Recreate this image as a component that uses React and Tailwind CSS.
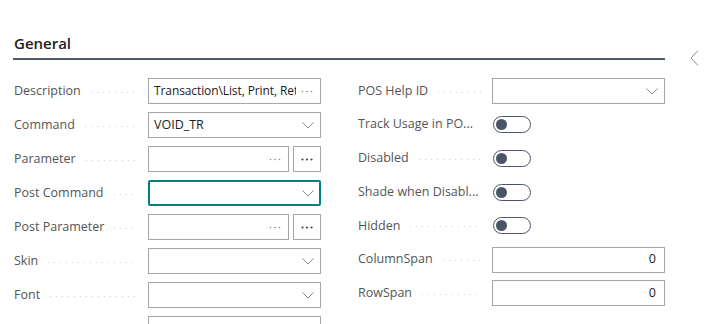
import React from 'react';

const Chevron = () => (
  <svg width="12" height="7" viewBox="0 0 12 7" className="shrink-0">
    <path d="M0.5 0.5 L6 6 L11.5 0.5" fill="none" stroke="#8a8a8a" strokeWidth="1" />
  </svg>
);

const Leader = () => (
  <div className="flex-1 h-px ml-[10px] mr-[10px] mt-[2px] bg-[linear-gradient(to_right,#cfcfcf_1px,transparent_1px)] bg-[length:6px_1px] bg-repeat-x" />
);

const Label = ({ text }) => (
  <div className="w-[134px] shrink-0 flex items-center">
    <span className="text-[12.5px] text-[#555] whitespace-nowrap">{text}</span>
    <Leader />
  </div>
);

const Dots = ({ dark }) => (
  <svg width="12" height="3" viewBox="0 0 12 3" className="shrink-0">
    {[1.5, 6, 10.5].map((cx) => (
      <circle key={cx} cx={cx} cy="1.5" r={dark ? 1.1 : 0.8} fill={dark ? '#444' : '#8a8a8a'} />
    ))}
  </svg>
);

const TextBox = ({ value, dots, align = 'left', size = 'text-[12.5px]' }) => (
  <div className="flex-1 min-w-0 h-[26px] border border-[#a6a6a6] flex items-center pl-[5px] pr-[7px]">
    <span
      className={`flex-1 min-w-0 overflow-hidden whitespace-nowrap ${size} text-[#212121] ${
        align === 'right' ? 'text-right pr-[1px]' : ''
      }`}
    >
      {value}
    </span>
    {dots && <span className="pl-[5px] flex"><Dots /></span>}
  </div>
);

const SelectBox = ({ value, focused }) => (
  <div
    className={`flex-1 min-w-0 h-[26px] flex items-center justify-between ${
      focused ? 'border-2 border-[#00807e] rounded-[2px] pl-[4px] pr-[5px]' : 'border border-[#a6a6a6] pl-[5px] pr-[6px]'
    }`}
  >
    <span className="text-[12.5px] text-[#212121]">{value}</span>
    <Chevron />
  </div>
);

const LookupBox = () => (
  <div className="flex-1 min-w-0 flex gap-[4px]">
    <TextBox value="" dots />
    <div className="w-[28px] h-[26px] border border-[#a6a6a6] flex items-center justify-center">
      <Dots dark />
    </div>
  </div>
);

const Toggle = () => (
  <div className="w-[38px] h-[17px] rounded-full border border-[#4b5567] flex items-center px-[2px] ml-[1px]">
    <div className="w-[11px] h-[11px] rounded-full bg-[#4b5567]" />
  </div>
);

const Row = ({ label, children, h = 'h-[34px]' }) => (
  <div className={`flex items-center ${h}`}>
    <Label text={label} />
    <div className="flex-1 min-w-0 flex items-center">{children}</div>
  </div>
);

export default function App() {
  const left = [
    ['Description', <TextBox value="Transaction\List, Print, Ret" dots size="text-[12px] tracking-[-0.1px]" />],
    ['Command', <SelectBox value="VOID_TR" />],
    ['Parameter', <LookupBox />],
    ['Post Command', <SelectBox value="" focused />],
    ['Post Parameter', <LookupBox />],
    ['Skin', <SelectBox value="" />],
    ['Font', <SelectBox value="" />],
    ['', <SelectBox value="" />],
  ];

  const right = [
    ['POS Help ID', <SelectBox value="" />],
    ['Track Usage in PO...', <Toggle />],
    ['Disabled', <Toggle />],
    ['Shade when Disabl...', <Toggle />],
    ['Hidden', <Toggle />],
    ['ColumnSpan', <TextBox value="0" align="right" />],
    ['RowSpan', <TextBox value="0" align="right" />],
  ];

  return (
    <div className="w-[705px] h-[324px] overflow-hidden bg-white font-['Open_Sans','Noto_Sans',sans-serif] flex">
      <div className="w-[652px] shrink-0 ml-[13px] pt-[33px]">
        <div className="border-b-2 border-[#4f5a6b] pb-[5px] pl-[1px]">
          <h2 className="text-[15px] font-semibold text-[#212121] leading-[20px]">General</h2>
        </div>
        <div className="grid grid-cols-2 gap-x-[37px] pt-[14px] pl-[1px]">
          <div className="flex flex-col min-w-0">
            {left.map(([label, control], i) => (
              <Row key={i} label={label}>{control}</Row>
            ))}
          </div>
          <div className="flex flex-col min-w-0">
            {right.map(([label, control], i) => (
              <Row key={i} label={label} h={i === 0 ? 'h-[34px]' : 'h-[33.7px]'}>{control}</Row>
            ))}
          </div>
        </div>
      </div>
      <div className="flex-1 pl-[25px] pt-[50px]">
        <svg width="9" height="16" viewBox="0 0 9 16">
          <path d="M8 0.5 L1 8 L8 15.5" fill="none" stroke="#8a8a8a" strokeWidth="1" />
        </svg>
      </div>
    </div>
  );
}
